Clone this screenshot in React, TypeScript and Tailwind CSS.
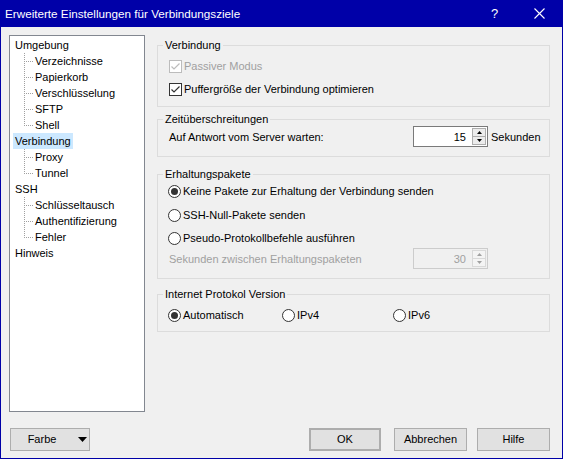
import type { ReactNode } from "react";

const tree = [
  {
    label: "Umgebung",
    children: ["Verzeichnisse", "Papierkorb", "Verschlüsselung", "SFTP", "Shell"],
  },
  { label: "Verbindung", selected: true, children: ["Proxy", "Tunnel"] },
  { label: "SSH", children: ["Schlüsseltausch", "Authentifizierung", "Fehler"] },
  { label: "Hinweis", children: [] as string[] },
];

function Connector({ last }: { last: boolean }) {
  return (
    <svg width="9" height="16" className="shrink-0">
      <line
        x1="0.5"
        y1="0"
        x2="0.5"
        y2={last ? 9 : 16}
        stroke="#a0a0a0"
        strokeDasharray="1 1"
      />
      <line x1="1" y1="8.5" x2="9" y2="8.5" stroke="#a0a0a0" strokeDasharray="1 1" strokeDashoffset="1" />
    </svg>
  );
}

function Tree() {
  return (
    <div className="h-[377px] w-[136px] shrink-0 border border-[#828790] bg-white pt-[1px]">
      {tree.map((node) => (
        <div key={node.label}>
          <div className="flex h-[16px] items-center">
            <span
              className={`ml-[3px] px-[2px] leading-[16px] ${node.selected ? "bg-[#cce8ff]" : ""}`}
            >
              {node.label}
            </span>
          </div>
          {node.children.map((child, i) => (
            <div key={child} className="flex h-[16px] items-center">
              <div className="w-[14px] shrink-0" />
              <Connector last={i === node.children.length - 1} />
              <span className="px-[2px] leading-[16px]">{child}</span>
            </div>
          ))}
        </div>
      ))}
    </div>
  );
}

function Group({
  title,
  className,
  children,
}: {
  title: string;
  className?: string;
  children: ReactNode;
}) {
  return (
    <fieldset className={`border border-[#dcdcdc] px-[5px] ${className ?? ""}`}>
      <legend className="px-[2px] leading-[16px]">{title}</legend>
      {children}
    </fieldset>
  );
}

function Checkbox({ label, disabled }: { label: string; disabled?: boolean }) {
  const c = disabled ? "#bcbcbc" : "#333333";
  return (
    <div className="flex h-[16px] items-center pl-[6px]">
      <svg width="13" height="13" className="shrink-0">
        <rect x="0.5" y="0.5" width="12" height="12" fill="#ffffff" stroke={c} />
        <path d="M2.5 6.5 L5 9 L10.5 3.5" fill="none" stroke={c} strokeWidth="1.2" />
      </svg>
      <span className={`ml-[2px] leading-[16px] ${disabled ? "text-[#a0a0a0]" : ""}`}>{label}</span>
    </div>
  );
}

function Radio({ label, checked, className }: { label: string; checked?: boolean; className?: string }) {
  return (
    <div className={`flex h-[16px] items-center ${className ?? ""}`}>
      <svg width="13" height="13" className="shrink-0">
        <circle cx="6.5" cy="6.5" r="6" fill="#ffffff" stroke="#333333" />
        {checked ? <circle cx="6.5" cy="6.5" r="3.5" fill="#333333" /> : null}
      </svg>
      <span className="ml-[2px] leading-[16px]">{label}</span>
    </div>
  );
}

function Arrow({ up, color }: { up?: boolean; color: string }) {
  return (
    <svg width="5" height="3">
      <path d={up ? "M0 3 L2.5 0 L5 3 Z" : "M0 0 L2.5 3 L5 0 Z"} fill={color} />
    </svg>
  );
}

function Spin({ value, disabled }: { value: string; disabled?: boolean }) {
  const arrow = disabled ? "#a0a0a0" : "#000000";
  return (
    <div
      className={`flex h-[21px] w-[75px] shrink-0 items-center border ${
        disabled ? "border-[#cccccc] bg-[#f0f0f0] text-[#a0a0a0]" : "border-[#7a7a7a] bg-white"
      }`}
    >
      <span className="flex-1 pr-[6px] text-right leading-[16px]">{value}</span>
      <div
        className={`mr-[1px] flex h-[17px] w-[14px] flex-col border ${
          disabled ? "border-[#d9d9d9] bg-[#f4f4f4]" : "border-[#adadad] bg-[#ececec]"
        }`}
      >
        <div className="flex flex-1 items-center justify-center">
          <Arrow up color={arrow} />
        </div>
        <div className={`h-px ${disabled ? "bg-[#d9d9d9]" : "bg-[#adadad]"}`} />
        <div className="flex flex-1 items-center justify-center">
          <Arrow color={arrow} />
        </div>
      </div>
    </div>
  );
}

function Button({ children, className }: { children: ReactNode; className?: string }) {
  return (
    <div
      className={`flex h-[23px] items-center justify-center border border-[#adadad] bg-[#e1e1e1] ${className ?? ""}`}
    >
      {children}
    </div>
  );
}

export default function App() {
  return (
    <div className="flex h-[459px] w-[563px] flex-col border-x border-b border-[#0000a8] bg-[#f0f0f0] font-['Liberation_Sans',Arial,sans-serif] text-[11px] text-black">
      <div className="flex h-[27px] shrink-0 items-center bg-[#0000a8] text-white">
        <span className="flex-1 pl-[4px] text-[11.7px]">
          Erweiterte Einstellungen für Verbindungsziele
        </span>
        <div className="flex h-full w-[45px] items-center justify-center text-[13px]">?</div>
        <div className="flex h-full w-[45px] items-center justify-center">
          <svg width="11" height="11">
            <path d="M0.5 0.5 L10.5 10.5 M10.5 0.5 L0.5 10.5" stroke="#ffffff" strokeWidth="1.1" />
          </svg>
        </div>
      </div>

      <div className="flex gap-[12px] pl-[8px] pr-[12px] pt-[8px]">
        <Tree />

        <div className="flex w-[393px] flex-col pt-[2px]">
          <Group title="Verbindung" className="pb-[9px]">
            <div className="mt-[5px]">
              <Checkbox label="Passiver Modus" disabled />
            </div>
            <div className="mt-[7px]">
              <Checkbox label="Puffergröße der Verbindung optimieren" />
            </div>
          </Group>

          <Group title="Zeitüberschreitungen" className="mt-[4px] pb-[9px]">
            <div className="-mt-[1px] flex h-[21px] items-center pl-[6px]">
              <span className="w-[244px] leading-[16px]">Auf Antwort vom Server warten:</span>
              <Spin value="15" />
              <span className="ml-[3px] leading-[16px]">Sekunden</span>
            </div>
          </Group>

          <Group title="Erhaltungspakete" className="mt-[9px] pb-[9px]">
            <Radio className="mt-[1px] pl-[5px]" label="Keine Pakete zur Erhaltung der Verbindung senden" checked />
            <Radio className="mt-[8px] pl-[5px]" label="SSH-Null-Pakete senden" />
            <Radio className="mt-[7px] pl-[5px]" label="Pseudo-Protokollbefehle ausführen" />
            <div className="mt-[2px] flex h-[21px] items-center pl-[6px] text-[#a0a0a0]">
              <span className="w-[244px] leading-[16px]">Sekunden zwischen Erhaltungspaketen</span>
              <Spin value="30" disabled />
            </div>
          </Group>

          <Group title="Internet Protokol Version" className="mt-[7px] pb-[8px]">
            <div className="mt-[5px] flex pl-[5px]">
              <Radio className="w-[114px]" label="Automatisch" checked />
              <Radio className="w-[111px]" label="IPv4" />
              <Radio label="IPv6" />
            </div>
          </Group>
        </div>
      </div>

      <div className="mt-[16px] flex pl-[9px] pr-[12px]">
        <Button className="w-[80px] justify-start">
          <span className="w-[62px] text-center">Farbe</span>
          <svg width="9" height="5" className="ml-[5px]">
            <path d="M0 0 L9 0 L4.5 5 Z" fill="#000000" />
          </svg>
        </Button>
        <Button className="ml-auto w-[72px] border-2 border-[#0078d7]">OK</Button>
        <Button className="ml-[13px] w-[73px]">Abbrechen</Button>
        <Button className="ml-[10px] w-[73px]">Hilfe</Button>
      </div>
    </div>
  );
}
